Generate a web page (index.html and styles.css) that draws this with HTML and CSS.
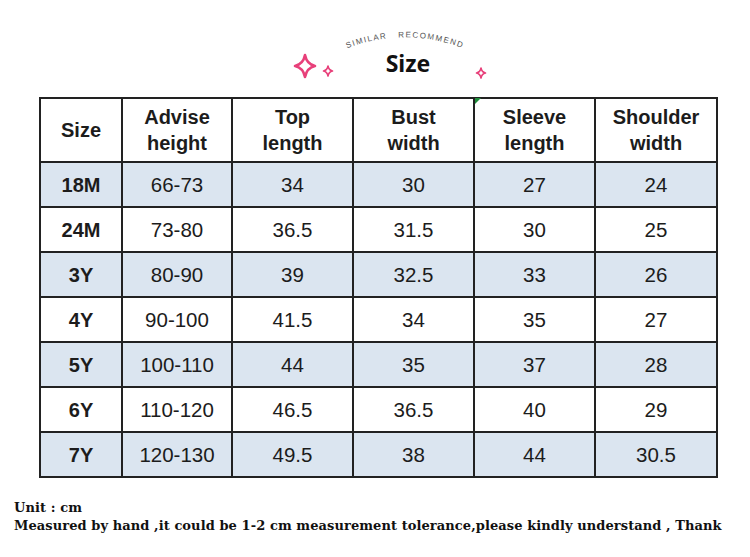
FILE: index.html
```html
<!DOCTYPE html>
<html>
<head>
<meta charset="utf-8">
<link rel="stylesheet" href="styles.css">
</head>
<body>
<div class="page">
  <header class="head">
    <svg class="head-art" width="750" height="98" viewBox="0 0 750 98">
      <defs>
        <path id="arc" d="M 336 53 A 160 160 0 0 1 474 53"/>
      </defs>
      <text class="arc-text"><textPath href="#arc" startOffset="50%" text-anchor="middle">SIMILAR&#160;&#160;&#160;RECOMMEND</textPath></text>
      <g class="spark" transform="translate(305,66)">
        <path d="M0,-11 Q1.8,-1.8 10,0 Q1.8,1.8 0,11 Q-1.8,1.8 -10,0 Q-1.8,-1.8 0,-11 Z"/>
      </g>
      <g class="spark small" transform="translate(328,71)">
        <path d="M0,-5 Q0.8,-0.8 4.5,0 Q0.8,0.8 0,5 Q-0.8,0.8 -4.5,0 Q-0.8,-0.8 0,-5 Z"/>
      </g>
      <g class="spark small" transform="translate(481,73)">
        <path d="M0,-5 Q0.8,-0.8 4.5,0 Q0.8,0.8 0,5 Q-0.8,0.8 -4.5,0 Q-0.8,-0.8 0,-5 Z"/>
      </g>
      <text class="title" x="408" y="72" text-anchor="middle">Size</text>
    </svg>
  </header>

  <table class="sizes">
    <colgroup>
      <col class="c1"><col class="c2"><col class="c3"><col class="c4"><col class="c5"><col class="c6">
    </colgroup>
    <thead>
      <tr>
        <th>Size</th>
        <th>Advise<br>height</th>
        <th>Top<br>length</th>
        <th>Bust<br>width</th>
        <th class="flag">Sleeve<br>length</th>
        <th>Shoulder<br>width</th>
      </tr>
    </thead>
    <tbody>
      <tr class="alt"><td class="sz">18M</td><td>66-73</td><td>34</td><td>30</td><td>27</td><td>24</td></tr>
      <tr><td class="sz">24M</td><td>73-80</td><td>36.5</td><td>31.5</td><td>30</td><td>25</td></tr>
      <tr class="alt"><td class="sz">3Y</td><td>80-90</td><td>39</td><td>32.5</td><td>33</td><td>26</td></tr>
      <tr><td class="sz">4Y</td><td>90-100</td><td>41.5</td><td>34</td><td>35</td><td>27</td></tr>
      <tr class="alt"><td class="sz">5Y</td><td>100-110</td><td>44</td><td>35</td><td>37</td><td>28</td></tr>
      <tr><td class="sz">6Y</td><td>110-120</td><td>46.5</td><td>36.5</td><td>40</td><td>29</td></tr>
      <tr class="alt"><td class="sz">7Y</td><td>120-130</td><td>49.5</td><td>38</td><td>44</td><td>30.5</td></tr>
    </tbody>
  </table>

  <div class="note">
    <p>Unit : cm</p>
    <p>Measured by hand ,it could be 1-2 cm measurement tolerance,please kindly understand , Thank you</p>
  </div>
</div>
</body>
</html>
```
FILE: styles.css
```css
html, body {
  margin: 0;
  padding: 0;
  background: #ffffff;
}
.page {
  width: 750px;
  height: 557px;
  overflow: hidden;
}
.head {
  height: 97px;
}
.head-art {
  display: block;
}
.arc-text {
  font-family: "Liberation Sans", Arial, sans-serif;
  font-size: 8px;
  letter-spacing: 1.4px;
  fill: #555555;
}
.spark path {
  fill: none;
  stroke: #e8407a;
  stroke-width: 2.6;
  stroke-linejoin: round;
}
.spark.small path {
  stroke-width: 1.6;
}
.title {
  font-family: "Noto Sans", "Open Sans", sans-serif;
  font-weight: 700;
  font-size: 23px;
  fill: #111111;
}
.sizes {
  margin-left: 39px;
  width: 677px;
  table-layout: fixed;
  border-collapse: collapse;
  font-family: "Liberation Sans", Arial, sans-serif;
  color: #1c1c1c;
}
.c1 { width: 82px; }
.c2 { width: 110px; }
.c3 { width: 121px; }
.c4 { width: 121px; }
.c5 { width: 121px; }
.c6 { width: 122px; }
.sizes th, .sizes td {
  border: 2px solid #222222;
  text-align: center;
  padding: 0;
}
.sizes th {
  height: 62px;
  font-size: 20px;
  font-weight: 700;
  line-height: 26px;
}
.sizes td {
  height: 43px;
  font-size: 20.5px;
  line-height: 24px;
}
.sizes td.sz {
  font-weight: 700;
  font-size: 20px;
}
.sizes tr.alt td {
  background: #dbe5f0;
}
.flag {
  position: relative;
}
.flag::before {
  content: "";
  position: absolute;
  left: 0;
  top: -1px;
  width: 0;
  height: 0;
  border-top: 6px solid #1e8c3a;
  border-right: 6px solid transparent;
}
.note {
  margin-top: 21px;
  padding-left: 14px;
  height: 38px;
  overflow: hidden;
  font-family: "DejaVu Serif", "Liberation Serif", serif;
  font-weight: 700;
  font-size: 13px;
  line-height: 18px;
  letter-spacing: 0.08px;
  color: #111111;
}
.note p {
  margin: 0;
  width: 730px;
}
```
